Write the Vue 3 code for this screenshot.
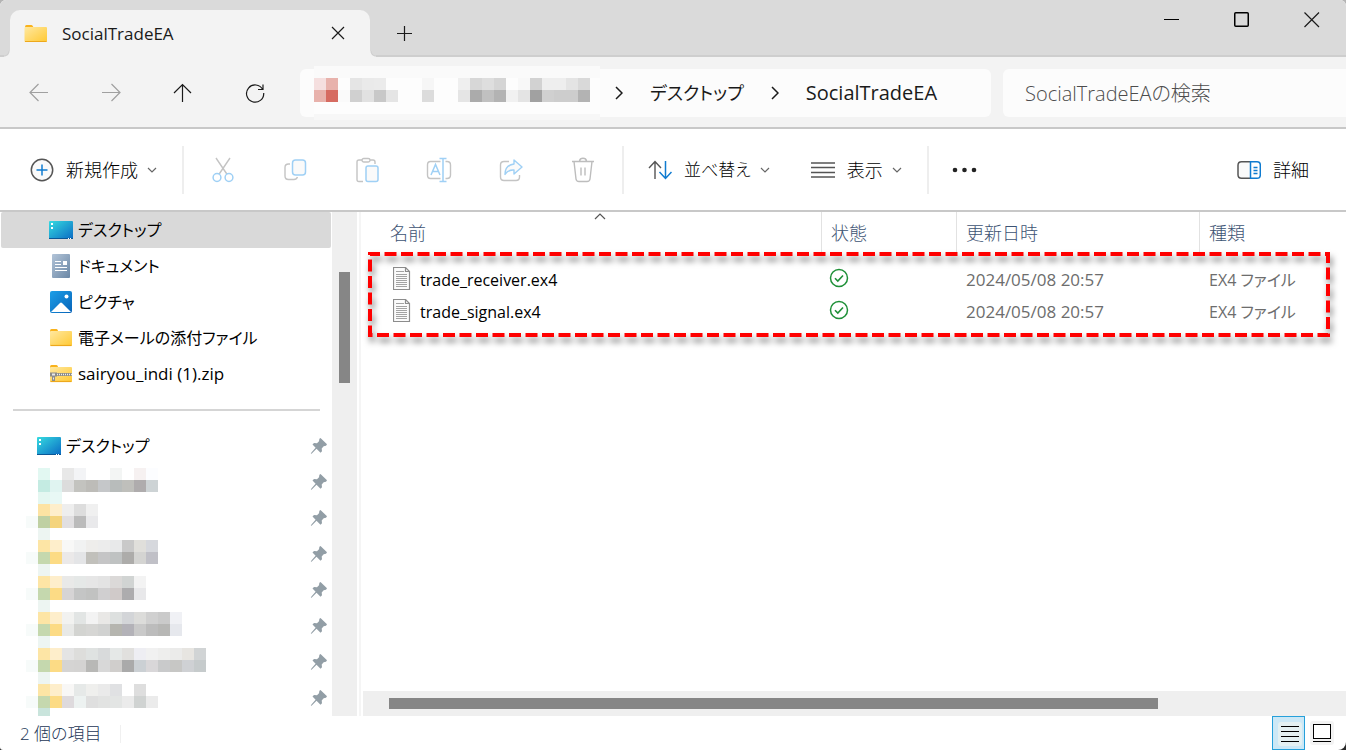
<template>
  <div class="window">
    <header class="titlebar">
      <div class="tab">
        <svg class="icon-folder" width="24" height="20" viewBox="0 0 24 20">
          <path d="M1 3q0-2 1.500-2h5q1 0 1.500 1.500V6H1z" fill="#f9b21b" />
          <rect x="0.500" y="3" width="22.500" height="15" rx="1" fill="url(#folderFill)" />
          <path d="M1 17.500h21.500" stroke="#eda81c" />
        </svg>
        <span class="tab-title">SocialTradeEA</span>
        <button class="icon-btn tab-close" aria-label="タブを閉じる">
          <svg width="14" height="14" viewBox="0 0 14 14"><path d="M1 1l12 12M13 1L1 13" /></svg>
        </button>
      </div>
      <button class="icon-btn tab-add" aria-label="新しいタブ">
        <svg width="16" height="16" viewBox="0 0 16 16"><path d="M8.500 0v15M1 7.500h15" /></svg>
      </button>
      <div class="window-controls">
        <button class="icon-btn" aria-label="最小化">
          <svg width="16" height="16" viewBox="0 0 16 16"><path d="M0 7.500h15" stroke="#000" stroke-width="1" /></svg>
        </button>
        <button class="icon-btn" aria-label="最大化">
          <svg width="16" height="16" viewBox="0 0 16 16"><rect x="0.750" y="0.750" width="13.500" height="13.500" rx="1" stroke="#000" stroke-width="1.500" /></svg>
        </button>
        <button class="icon-btn" aria-label="閉じる">
          <svg width="16" height="16" viewBox="0 0 16 16"><path d="M.5.500L15 15M15 .5L.5 15" /></svg>
        </button>
      </div>
    </header>

    <div class="navbar">
      <div class="nav-buttons">
        <button class="icon-btn" disabled aria-label="戻る">
          <svg width="20" height="20" viewBox="0 0 20 20"><path d="M19 9.500H1M9.500 1L1 9.500 9.500 18" stroke="#a0a0a0" /></svg>
        </button>
        <button class="icon-btn" disabled aria-label="進む">
          <svg width="20" height="20" viewBox="0 0 20 20"><path d="M1 9.500h18M10.500 1L19 9.500 10.500 18" stroke="#a0a0a0" /></svg>
        </button>
        <button class="icon-btn" aria-label="上へ">
          <svg width="20" height="20" viewBox="0 0 20 20"><path d="M9.500 19V1.500M1 10l8.500-8.500L18 10" /></svg>
        </button>
        <button class="icon-btn" aria-label="最新の情報に更新">
          <svg width="20" height="20" viewBox="0 0 20 20"><path d="M17.700 6.500A8.600 8.600 0 1 0 18.700 10M18 1.500v5h-5" /></svg>
        </button>
      </div>
      <nav class="address" aria-label="アドレス バー">
        <svg class="mosaic" width="286" height="54" viewBox="0 0 286 54" aria-hidden="true">
          <rect width="286" height="54" fill="#fafafa" />
          <rect y="12" width="286" height="36" fill="#fdfdfd" />
          <rect y="48" width="286" height="6" fill="#f7f7f7" />
          <rect v-for="c in addressCells" :key="c.key" :x="c.x" :y="c.y + 12" width="12" height="12" :fill="c.fill" />
        </svg>
        <svg class="crumb-arrow" width="8" height="14" viewBox="0 0 8 14"><path d="M1 1l6 6-6 6" /></svg>
        <a class="crumb" href="#">デスクトップ</a>
        <svg class="crumb-arrow" width="8" height="14" viewBox="0 0 8 14"><path d="M1 1l6 6-6 6" /></svg>
        <a class="crumb current" href="#">SocialTradeEA</a>
      </nav>
      <input class="search" type="search" placeholder="SocialTradeEAの検索" aria-label="SocialTradeEAの検索" />
    </div>

    <div class="toolbar">
      <button class="tool new-tool">
        <svg width="24" height="24" viewBox="0 0 24 24"><circle cx="12" cy="12" r="10.700" fill="#fafafa" stroke="#555" stroke-width="1.500" /><path d="M12 6.500v11M6.500 12h11" stroke="#0f7bd0" stroke-width="1.500" /></svg>
        <span>新規作成</span>
        <svg class="caret" width="10" height="6" viewBox="0 0 10 6"><path d="M1 1l4 4 4-4" /></svg>
      </button>
      <div class="edit-tools">
        <button class="icon-btn" disabled aria-label="切り取り">
          <svg width="26" height="26" viewBox="0 0 26 26"><path d="M6 1l11.500 17M20 1L8.500 18" stroke="#c4c4c4" stroke-width="1.400" /><g stroke="#9fd0f5" stroke-width="1.500" fill="#fff"><circle cx="7" cy="20.500" r="3.900" /><circle cx="19" cy="20.500" r="3.900" /></g></svg>
        </button>
        <button class="icon-btn" disabled aria-label="コピー">
          <svg width="26" height="26" viewBox="0 0 26 26"><path d="M8 7H6.500Q3 7 3 10.500V19q0 3.500 3.500 3.500H12q2.500 0 3.500-2.500" stroke="#c4c4c4" stroke-width="1.400" /><rect x="10.500" y="3" width="13" height="15" rx="3" stroke="#9fd0f5" stroke-width="1.500" fill="#fafafa" /></svg>
        </button>
        <button class="icon-btn" disabled aria-label="貼り付け">
          <svg width="26" height="26" viewBox="0 0 26 26"><path d="M9 24.500H5q-2 0-2-2V5q0-2 2-2h3M16 3h3q2 0 2 2v2" stroke="#c4c4c4" stroke-width="1.400" /><rect x="8" y="1.500" width="8" height="3.500" rx="1.700" stroke="#c4c4c4" stroke-width="1.400" /><rect x="12" y="9" width="12" height="15.500" rx="2" stroke="#9fd0f5" stroke-width="1.500" fill="#fafafa" /></svg>
        </button>
        <button class="icon-btn" disabled aria-label="名前の変更">
          <svg width="26" height="26" viewBox="0 0 26 26"><path d="M14.500 4.500h-10Q1.500 4.500 1.500 8v10q0 3.500 3 3.500h10M19.500 4.500h1.500q3.500 0 3.500 3.500v10q0 3.500-3.500 3.500h-1.500" stroke="#c4c4c4" stroke-width="1.400" /><path d="M5 18L9.500 7.500 14 18M6.500 14.500h6M17 1.500v23M13.500 1.500h7M13.500 24.500h7" stroke="#9fd0f5" stroke-width="1.500" /></svg>
        </button>
        <button class="icon-btn" disabled aria-label="共有">
          <svg width="26" height="26" viewBox="0 0 26 26"><path d="M11 4.500H6Q2.500 4.500 2.500 8v12q0 3.500 3.500 3.500h12q3.500 0 3.500-3.500v-2" stroke="#c4c4c4" stroke-width="1.400" /><path d="M16 3l8 7-8 7v-4q-6-.5-9 4.500 0-9.500 9-10.500z" stroke="#9fd0f5" stroke-width="1.400" stroke-linejoin="round" fill="#fafafa" /></svg>
        </button>
        <button class="icon-btn" disabled aria-label="削除">
          <svg width="26" height="26" viewBox="0 0 26 26"><path d="M2 4.500h22M9.500 4q.5-2.700 3.500-2.700T16.500 4M4 4.500L6 22q.3 2.500 3 2.500h8q2.700 0 3-2.500l2-17.500M11 10.500v8M15 10.500v8" stroke="#bdbdbd" stroke-width="1.400" /></svg>
        </button>
      </div>
      <button class="tool sort-tool">
        <svg width="24" height="20" viewBox="0 0 24 20"><path d="M7 19V2M1 8l6-6.500L13 8" stroke="#555" stroke-width="1.400" /><path d="M17.500 1v17M11.500 12l6 6.500 6-6.500" stroke="#0f7bd0" stroke-width="1.500" /></svg>
        <span>並べ替え</span>
        <svg class="caret" width="10" height="6" viewBox="0 0 10 6"><path d="M1 1l4 4 4-4" /></svg>
      </button>
      <button class="tool view-tool">
        <svg width="24" height="18" viewBox="0 0 24 18"><path d="M0 2h24M0 6.500h24M0 11.500h24M0 16h24" stroke="#555" stroke-width="1.400" /></svg>
        <span>表示</span>
        <svg class="caret" width="10" height="6" viewBox="0 0 10 6"><path d="M1 1l4 4 4-4" /></svg>
      </button>
      <button class="icon-btn more-tool" aria-label="もっと見る">
        <svg width="26" height="6" viewBox="0 0 26 6"><g fill="#222"><circle cx="3" cy="3" r="2.300" /><circle cx="12.500" cy="3" r="2.300" /><circle cx="22" cy="3" r="2.300" /></g></svg>
      </button>
      <button class="tool detail-tool">
        <svg width="24" height="20" viewBox="0 0 24 20"><path d="M13 18.200H4.500q-3.500 0-3.500-3.500V5.300q0-3.500 3.500-3.500H13" stroke="#555" stroke-width="1.500" fill="#fafafa" /><path d="M13.500 1.800h6.500q3.300 0 3.300 3.300v9.800q0 3.300-3.300 3.300h-6.500zM16.500 7.500h4M16.500 10.500h4M16.500 13.500h4" stroke="#0f7bd0" stroke-width="1.500" /></svg>
        <span>詳細</span>
      </button>
    </div>

    <div class="content">
      <aside class="sidebar">
        <ul class="tree">
          <li v-for="item in folders" :key="item.name">
            <a class="tree-item" :class="{ selected: item.selected, latin: item.latin }" href="#">
              <svg width="24" height="24" viewBox="0 0 24 24"><use :href="'#icon-' + item.icon" /></svg>
              <span>{{ item.name }}</span>
            </a>
          </li>
        </ul>
        <hr class="tree-divider" />
        <ul class="tree quick">
          <li>
            <a class="tree-item" href="#">
              <svg width="24" height="24" viewBox="0 0 24 24"><use href="#icon-desktop" /></svg>
              <span>デスクトップ</span>
              <svg class="pin" width="18" height="18" viewBox="0 0 18 18"><use href="#icon-pin" /></svg>
            </a>
          </li>
          <li v-for="(cells, i) in pinnedCells" :key="i">
            <a class="tree-item masked" href="#" aria-label="ピン留めされたフォルダー">
              <svg class="mosaic" width="192" height="36" viewBox="0 0 192 36">
                <rect v-for="c in cells" :key="c.key" :x="c.x" :y="c.y" width="12" height="12" :fill="c.fill" />
              </svg>
              <svg class="pin" width="18" height="18" viewBox="0 0 18 18"><use href="#icon-pin" /></svg>
            </a>
          </li>
        </ul>
      </aside>
      <div class="vscroll"><div class="vthumb"></div></div>

      <main class="files">
        <table class="file-table">
          <colgroup>
            <col class="col-name" />
            <col class="col-state" />
            <col class="col-date" />
            <col />
          </colgroup>
          <thead>
            <tr>
              <th>
                名前
                <svg class="sort-mark" width="12" height="7" viewBox="0 0 12 7"><path d="M1 6l5-5 5 5" /></svg>
              </th>
              <th>状態</th>
              <th>更新日時</th>
              <th>種類</th>
            </tr>
          </thead>
          <tbody>
            <tr v-for="file in files" :key="file.name">
              <td>
                <div class="file-name">
                  <svg width="18" height="23" viewBox="0 0 18 23"><path d="M.5.500h12l4 4v18H.5z" fill="#fbfbfb" stroke="#8c8c8c" /><path d="M12.500.500v4h4" stroke="#8c8c8c" /><path d="M3 4.500h8M3 7.500h11M3 9.500h11M3 11.500h11M3 13.500h11M3 15.500h11M3 17.500h11M3 19.500h11" stroke="#a3a3a3" stroke-width="1" /></svg>
                  <span>{{ file.name }}</span>
                </div>
              </td>
              <td class="state">
                <svg width="20" height="20" viewBox="0 0 20 20" role="img" aria-label="このデバイスで使用可能"><circle cx="10" cy="10" r="8.500" stroke="#1f9038" stroke-width="1.500" /><path d="M6 10.200l2.800 2.800L14 7.500" stroke="#1f9038" stroke-width="1.600" /></svg>
              </td>
              <td>{{ file.date }}</td>
              <td class="type">{{ file.type }}</td>
            </tr>
          </tbody>
        </table>
        <svg class="highlight" aria-hidden="true"><rect x="2" y="2" /></svg>
        <div class="hscroll"><div class="hthumb"></div></div>
      </main>
    </div>

    <footer class="statusbar">
      <span class="count">2 個の項目</span>
      <div class="view-switch">
        <button class="icon-btn active" aria-label="詳細表示">
          <svg width="24" height="24" viewBox="0 0 24 24"><rect width="24" height="24" rx="3" fill="#e4f0f2" stroke="none" /><path d="M3 4.500h18M3 9.500h18M3 14.500h18M3 19.500h18" stroke="#000" stroke-width="1" /></svg>
        </button>
        <button class="icon-btn" aria-label="大アイコン">
          <svg width="24" height="24" viewBox="0 0 24 24"><rect width="24" height="24" rx="3" fill="#f3f3f3" stroke="none" /><rect x="3.500" y="3.500" width="17" height="14" fill="#fff" stroke="#000" stroke-width="1" /><path d="M3 20.500h18" stroke="#000" stroke-width="1" /></svg>
        </button>
      </div>
    </footer>

    <svg class="defs" width="0" height="0" aria-hidden="true">
      <defs>
        <linearGradient id="folderFill" x1="0" y1="0" x2="1" y2="1">
          <stop offset="0" stop-color="#ffe8a0" />
          <stop offset="1" stop-color="#ffc933" />
        </linearGradient>
        <linearGradient id="desktopFill" x1="0" y1="0" x2="1" y2="1">
          <stop offset="0" stop-color="#36dbe0" />
          <stop offset="1" stop-color="#0a6bc4" />
        </linearGradient>
        <linearGradient id="docFill" x1="0" y1="0" x2="1" y2="1">
          <stop offset="0" stop-color="#b2c4d8" />
          <stop offset="1" stop-color="#6a87a5" />
        </linearGradient>
        <linearGradient id="picFill" x1="0" y1="0" x2="1" y2="1">
          <stop offset="0" stop-color="#1c9fe8" />
          <stop offset="1" stop-color="#0863b8" />
        </linearGradient>
        <symbol id="icon-desktop" viewBox="0 0 24 24">
          <rect y="3" width="24" height="18" rx="1" fill="url(#desktopFill)" />
          <path d="M0 20.500h24" stroke="#0b5795" stroke-width="1" />
          <path d="M2 5h2v2H2zM2 9h2v2H2zM19 20h1v1h-1zM21 20h1v1h-1z" fill="#fff" />
        </symbol>
        <symbol id="icon-document" viewBox="0 0 24 24">
          <rect x="3" width="18" height="24" rx="1" fill="url(#docFill)" />
          <path d="M6 7.500h6M6 10.500h6M6 13.500h12M6 16.500h12" stroke="#fff" />
          <path d="M14 7h4v4h-4z" fill="#fff" />
        </symbol>
        <symbol id="icon-picture" viewBox="0 0 24 24">
          <rect x="1" y="1" width="22" height="22" rx="2" fill="url(#picFill)" />
          <path d="M2 22l9-9q1-1 2 0l9 9z" fill="#fff" />
          <circle cx="17.500" cy="6.500" r="2" fill="#fff" />
        </symbol>
        <symbol id="icon-folder" viewBox="0 0 24 24">
          <path d="M1 5q0-2 1.500-2h5q1 0 1.500 1.500V8H1z" fill="#f9b21b" />
          <rect x="1" y="5" width="22" height="15" rx="1" fill="url(#folderFill)" />
          <path d="M1.500 19.500h21" stroke="#eda81c" />
        </symbol>
        <symbol id="icon-zip" viewBox="0 0 24 24">
          <path d="M1 5q0-2 1.500-2h5q1 0 1.500 1.500V8H1z" fill="#f9b21b" />
          <rect x="1" y="5" width="22" height="15" rx="1" fill="url(#folderFill)" />
          <path d="M1.500 19.500h21" stroke="#eda81c" />
          <path d="M8 12.500h15" stroke="#8d8d86" stroke-width="3" />
          <path d="M8 12.500h15" stroke="#eee" stroke-width="1.500" stroke-dasharray="1 1" />
          <path d="M1 10.500h7v4H6V19H3v-4.500H1z" fill="#8c8c8c" />
          <path d="M3 11.500h3v2H3zM4 15.500h1v2H4z" fill="#e8e8e8" />
        </symbol>
        <symbol id="icon-pin" viewBox="0 0 18 18">
          <path d="M10.500 1L17 7.300l-1 1.500-2.300.4-2 2.300.3 2.800-1.500 1.500-4-4L1.800 16.500.8 17l.6-1.500 4.200-4.700L2.500 7.500 4 6l3 .3 2-2 .4-2.500z" fill="#929ea6" />
        </symbol>
      </defs>
    </svg>
  </div>
</template>

<script setup>
const folders = [
  { name: "デスクトップ", icon: "desktop", selected: true },
  { name: "ドキュメント", icon: "document" },
  { name: "ピクチャ", icon: "picture" },
  { name: "電子メールの添付ファイル", icon: "folder" },
  { name: "sairyou_indi (1).zip", icon: "zip", latin: true },
];

const files = [
  { name: "trade_receiver.ex4", date: "2024/05/08 20:57", type: "EX4 ファイル" },
  { name: "trade_signal.ex4", date: "2024/05/08 20:57", type: "EX4 ファイル" },
];

// one string per row of 12px cells, "-" leaves a cell empty
const addressRows = [
  "f5dfdf e8b2ac - e5e5e5 eaeaea ebebeb - - - f6f6f6 - - efefef d7d7d7 dedede d5d5d5 - f8f8f8 d2d2d2 eeeeee eeeeee e4e4e4 d9d9d9",
  "e8b2ac d66b61 fafafa d0d0d0 e1e1e1 c8c8c8 e5e5e5 - - dcdcdc - - e5e5e5 ababab c0c0c0 b3b3b3 f1f1f1 e4e4e4 a1a1a1 d0d0d0 cdcdcd cdcdcd b3b3b3",
];

const pinnedRows = [
  [
    "- e2f8f2 - e8e8e8 f3f4f6 - - f3f5f4 - f6f1f1 fcfdff",
    "- c4ebe2 e0f4f1 dcdcdc c3c3bf bdbcb8 c5c7c9 b8bcbb bfbfbb afacad cdd3d5",
    "- e4f7f1 e8f8f5",
  ],
  [
    "- fde3a3 feeecb eeeeee dddddd f0f0f0",
    "f7fbfa bfd0a3 f4d47d e1dfe1 bbbbbb e9e9eb",
    "- edf5f2",
  ],
  [
    "- fde5a5 feeecb f8f8f7 f1f2f2 eeedeb ececec e8e9ea c9c9c9 e0dfdb d6d8dd",
    "f7fbfa c5d8ae fcdb85 ebe9e9 e4e5e7 c1c0bb c5c5c6 bfc2c2 adacaa d4d4d2 c0c0c7",
    "- edf5f2",
  ],
  [
    "- fde5a5 feeecb e9e9e8 e5e8e7 e6e6e6 e3e3e3 dbd9d8 d1d4d3 f3f3f3",
    "f7fbfa c5d8ae fcdb85 d6d4d5 c4c5c5 c1c2c1 d0cfd0 d0cac9 adacae e8e8ea",
    "- edf5f2",
  ],
  [
    "- fde5a5 feeecb f2f2f0 e2e5e4 f3f3f3 e9e8e6 dde0df d3d5d8 dcdcda d0d0d0 cacaca f0f1f5",
    "f7fbfa c5d8ae fcdb85 e8e9e7 d3d4d1 d6d6d4 d1d2d1 b5b5af b3b2b8 c9c9c9 bcbcbc b7b7b5 e6e8ed",
    "- edf5f2",
  ],
  [
    "- fde5a5 feeecb e4e4e4 dddddb dfe2e1 d8dadb e5e8e7 e1e0de eeeef3 f1f1f1 eeeeed ebebea e7e5e1 d1d4d5",
    "f7fbfa c5d8ae fcdb85 d5d4d3 d4d3d2 b8b8b6 d8d8d8 d0cecc aaaaaa cbd0d4 d9d7d9 c9cacb c7c7c5 cfd1d4 c6cbcc",
    "- edf5f2",
  ],
  [
    "- fde5a5 feeecb f8f7f6 e6e9e8 efefed eaeaea e0e1e3 - dedede",
    "f7fbfa c5d8ae fcdb85 dedadd edf2f1 dfdfdf e2e3e2 e3e5e4 ebebeb d0d3d2 ebebeb",
    "- c9e4dc",
  ],
];

function toCells(rows) {
  return rows.flatMap((row, y) =>
    row
      .split(" ")
      .map((hex, x) => ({ key: `${x}-${y}`, x: x * 12, y: y * 12, fill: "#" + hex, hex }))
      .filter((c) => c.hex !== "-")
  );
}

const addressCells = toCells(addressRows);
const pinnedCells = pinnedRows.map(toCells);
</script>

<style>
html {
  background: linear-gradient(#b4b4b4, #2a2a2a);
}
body {
  margin: 0;
}
</style>

<style scoped>
.window {
  display: flex;
  flex-direction: column;
  height: 100vh;
  overflow: hidden;
  background: #fff;
  border-radius: 6px 6px 8px 3px;
  color: #1a1a1a;
  font-family: "Open Sans", "Noto Sans CJK JP", sans-serif;
  font-size: 17px;
  font-feature-settings: "palt";
  line-height: 24px;
}
svg {
  display: block;
  flex-shrink: 0;
  fill: none;
  stroke-width: 1.2;
}
.mosaic {
  shape-rendering: crispEdges;
}
.defs {
  position: absolute;
}
button {
  padding: 0;
  border: 0;
  background: none;
  color: inherit;
  font: inherit;
  font-feature-settings: inherit;
}
a {
  color: inherit;
  text-decoration: none;
}
.icon-btn {
  display: flex;
  align-items: center;
  justify-content: center;
  flex-shrink: 0;
  stroke: #1a1a1a;
}
.more-tool {
  stroke: none;
}

.titlebar {
  display: flex;
  height: 57px;
  box-sizing: border-box;
  background: #dadada;
  box-shadow: inset 0 -2px #cecece;
}
.tab {
  position: relative;
  display: flex;
  align-items: center;
  width: 360px;
  margin: 10px 0 0 10px;
  padding: 0 25px 0 14px;
  box-sizing: border-box;
  background: #f3f3f3;
  border-radius: 10px 10px 0 0;
}
.tab::before,
.tab::after {
  content: "";
  position: absolute;
  bottom: 0;
  width: 6px;
  height: 6px;
}
.tab::before {
  right: 100%;
  background: radial-gradient(circle at 0 0, #dadada 4px, #cecece 5px, #f3f3f3 6px);
}
.tab::after {
  left: 100%;
  background: radial-gradient(circle at 100% 0, #dadada 4px, #cecece 5px, #f3f3f3 6px);
}
.tab-title {
  flex: 1;
  margin-left: 14px;
  font-weight: 500;
}
.tab-close {
  padding-bottom: 2px;
}
.tab-add {
  margin-left: 26px;
  height: 47px;
  align-self: flex-end;
}
.window-controls {
  display: flex;
  gap: 54px;
  height: 40px;
  margin-left: auto;
  margin-right: 26px;
}

.navbar {
  display: flex;
  align-items: center;
  height: 70px;
  flex-shrink: 0;
  padding-top: 2px;
  box-sizing: border-box;
  background: #f3f3f3;
}
.nav-buttons {
  display: flex;
  gap: 52px;
  padding: 0 35px 0 29px;
}
.address {
  display: flex;
  align-items: center;
  flex: 1;
  height: 48px;
  padding-left: 14px;
  background: #fcfcfc;
  border-radius: 6px;
}
.crumb-arrow {
  margin: 0 27px 0 15px;
  stroke: #1a1a1a;
  stroke-width: 1.5;
}
.crumb {
  margin-right: 12px;
  font-size: 18px;
}
.crumb.current {
  font-size: 20px;
}
.search {
  width: 343px;
  height: 48px;
  margin-left: 12px;
  padding: 0 22px;
  box-sizing: border-box;
  border: 0;
  border-radius: 6px 0 0 6px;
  background: #fcfcfc;
  font: inherit;
  font-size: 20px;
  font-weight: 300;
  font-feature-settings: inherit;
}
.search::placeholder {
  color: #4c4c4c;
  opacity: 1;
}

.toolbar {
  display: flex;
  align-items: center;
  height: 85px;
  flex-shrink: 0;
  box-sizing: border-box;
  border: solid #c8c8c8;
  border-width: 2px 0;
  font-size: 18px;
  font-weight: 300;
  color: #000;
}
.tool {
  display: flex;
  align-items: center;
  gap: 12px;
  white-space: nowrap;
}
.caret {
  margin-left: -3px;
  stroke: #666;
}
.new-tool {
  margin-left: 30px;
}
.edit-tools {
  display: flex;
  align-items: center;
  gap: 46px;
  height: 48px;
  margin-left: 25px;
  padding: 0 26px;
  border: solid #eee;
  border-width: 0 2px;
}
.sort-tool {
  margin-left: 24px;
  font-size: 17px;
}
.view-tool {
  margin-left: 41px;
}
.more-tool {
  height: 48px;
  margin-left: 25px;
  padding-left: 23px;
  border-left: 2px solid #eee;
}
.detail-tool {
  margin-left: auto;
  margin-right: 37px;
}

.content {
  display: flex;
  flex: 1;
  min-height: 0;
}
.sidebar {
  width: 332px;
  flex-shrink: 0;
  overflow: hidden;
}
.tree {
  margin: 0;
  padding: 0 1px;
  list-style: none;
}
.tree-item {
  display: flex;
  align-items: center;
  gap: 5px;
  height: 36px;
  padding: 0 3px 0 48px;
  border-radius: 2px;
  font-size: 16px;
  color: #000;
}
.tree-item.latin {
  font-size: 17px;
}
.tree-item.selected {
  background: #d9d9d9;
}
.quick .tree-item {
  padding-left: 36px;
}
.quick .masked {
  align-items: flex-start;
  padding-left: 25px;
}
.masked .mosaic {
  margin-top: 4px;
}
.pin {
  margin-left: auto;
}
.masked .pin {
  margin-top: 9px;
}
.tree-divider {
  height: 2px;
  margin: 17px 12px 17px 13px;
  border: 0;
  background: #d5d5d5;
}
.vscroll {
  width: 25px;
  flex-shrink: 0;
  padding: 60px 7px 0;
  box-sizing: border-box;
  background: #efefef;
}
.vthumb {
  height: 111px;
  width: 11px;
  background: #868686;
}

.files {
  position: relative;
  display: flex;
  flex-direction: column;
  flex: 1;
  min-width: 0;
  margin-left: 2px;
  border-left: 2px solid #f5f5f5;
}
.file-table {
  width: 100%;
  table-layout: fixed;
  border-collapse: separate;
  border-spacing: 0;
  font-size: 17px;
  color: #6d6d6d;
}
.col-name {
  width: 460px;
}
.col-state {
  width: 135px;
}
.col-date {
  width: 243px;
}
th {
  position: relative;
  height: 42px;
  padding: 0 0 0 9px;
  box-sizing: border-box;
  border-left: 1px solid #e2e2e2;
  font-size: 18px;
  font-weight: 300;
  text-align: left;
  color: #3d5373;
}
th:first-child {
  padding-left: 29px;
  border-left: 0;
}
.sort-mark {
  position: absolute;
  top: 1px;
  left: 233px;
  stroke: #555;
}
tbody::before {
  content: "";
  display: block;
  height: 10px;
}
td {
  height: 32px;
  padding: 0 0 0 10px;
  box-sizing: border-box;
}
td:first-child {
  padding-left: 32px;
  font-size: 16px;
  color: #000;
}
.type {
  font-size: 16px;
}
.file-name {
  display: flex;
  align-items: center;
  gap: 9px;
}
.file-name svg {
  margin-bottom: 4px;
}
.state {
  padding: 0 0 4px 8px;
}
.highlight {
  position: absolute;
  top: 40px;
  left: 7px;
  width: calc(100% - 23px);
  height: 85px;
  overflow: visible;
  filter: drop-shadow(2px 5px 3px rgba(0, 0, 0, 0.5));
}
.highlight rect {
  width: calc(100% - 4px);
  height: 81px;
  stroke: #f00;
  stroke-width: 4;
  stroke-dasharray: 12 4.5;
  stroke-dashoffset: -14.5;
}
.hscroll {
  height: 25px;
  margin-top: auto;
  margin-left: 2px;
  padding: 7px 188px 7px 26px;
  box-sizing: border-box;
  background: #efefef;
}
.hthumb {
  height: 11px;
  background: #868686;
}

.statusbar {
  display: flex;
  justify-content: space-between;
  height: 34px;
  flex-shrink: 0;
  color: #1c3656;
}
.count {
  align-self: center;
  margin: 2px 0 0 20px;
  padding-right: 18px;
  border-right: 1px solid #f0f0f0;
  font-size: 17px;
  font-weight: 300;
  line-height: 18px;
}
.view-switch {
  display: flex;
  gap: 5px;
  margin-right: 12px;
}
.view-switch .active {
  width: 33px;
  padding: 2px 0 0 2px;
  border: 1px solid #26a0da;
  background: #cce8f6;
}
</style>
